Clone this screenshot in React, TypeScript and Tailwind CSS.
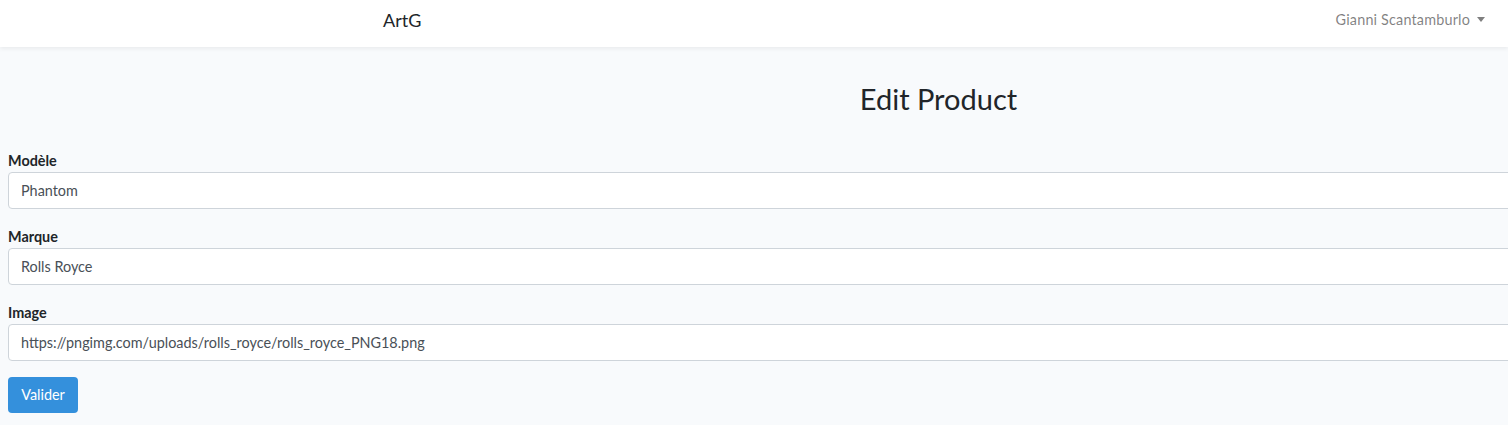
import { useState } from 'react';

const FIELDS = [
  { id: 'modele', label: 'Modèle', value: 'Phantom' },
  { id: 'marque', label: 'Marque', value: 'Rolls Royce' },
  { id: 'image', label: 'Image', value: 'https://pngimg.com/uploads/rolls_royce/rolls_royce_PNG18.png' },
];

export default function App() {
  const [values, setValues] = useState<Record<string, string>>(
    Object.fromEntries(FIELDS.map((f) => [f.id, f.value]))
  );

  return (
    <div
      className="w-[1508px] h-[425px] overflow-hidden bg-[#f8fafc] text-[#212529]"
      style={{ fontFamily: 'Lato, "Noto Sans", sans-serif' }}
    >
      <nav className="h-[47px] bg-white shadow-[0_2px_4px_rgba(0,0,0,0.06)] flex items-center relative">
        <div className="w-[1508px] flex items-center justify-between pl-[383px] pr-[23px] pb-[7px]">
          <a className="text-[18px] text-[#212529]">ArtG</a>
          <button className="flex items-center gap-[7px] text-[14.4px] tracking-[0.18px] text-[rgba(0,0,0,0.5)]">
            Gianni Scantamburlo
            <span className="w-0 h-0 border-x-[4.5px] border-x-transparent border-t-[5px] border-t-[rgba(0,0,0,0.5)] mb-[1px]" />
          </button>
        </div>
      </nav>

      <main className="w-[1869px] pl-[8px] pt-[34px]">
        <h1 className="text-center text-[29px] leading-[36px] font-normal mb-[32px]">Edit Product</h1>

        <form onSubmit={(e) => e.preventDefault()}>
          {FIELDS.map((f) => (
            <div key={f.id} className="mb-[16px]">
              <label htmlFor={f.id} className="block text-[14.4px] leading-[23px] font-bold">
                {f.label}
              </label>
              <input
                id={f.id}
                value={values[f.id]}
                onChange={(e) => setValues({ ...values, [f.id]: e.target.value })}
                className="block w-full h-[37px] px-[12px] bg-white border border-[#ced4da] rounded-[4px] text-[14.4px] text-[#495057] outline-none"
              />
            </div>
          ))}
          <button
            type="submit"
            className="h-[36px] w-[70px] rounded-[4px] bg-[#3490dc] text-white text-[14.4px]"
          >
            Valider
          </button>
        </form>
      </main>
    </div>
  );
}
